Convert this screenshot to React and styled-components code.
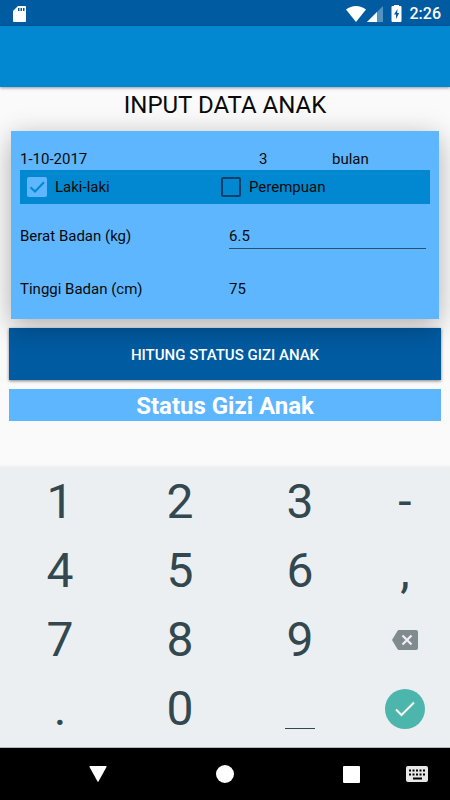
import { useState } from "react";
import styled, { createGlobalStyle } from "styled-components";

const GlobalStyle = createGlobalStyle`
* {
    box-sizing: border-box;
}
body {
    margin: 0;
    background-color: #fafafa;
    color: #0a0a0a;
    font-family: Roboto, sans-serif;
    font-size: 15px;
}
button, input {
    font-family: inherit;
    font-size: inherit;
    color: inherit;
}
`

const Page = styled.div`
display: flex;
flex-direction: column;
min-height: 100vh;
`

const StatusBar = styled.div`
display: flex;
align-items: center;
height: 26px;
padding: 1px 9px 0 12px;
background-color: #005ba1;
color: white;
`

const StatusIcons = styled.div`
display: flex;
align-items: center;
gap: 8px;
margin-left: auto;
`

const Signals = styled.div`
display: flex;
gap: 1px;
`

const Time = styled.span`
font-size: 16px;
font-weight: 500;
line-height: 26px;
`

const AppBar = styled.header`
height: 61px;
background-color: #0288d1;
box-shadow: 0 1px 3px rgba(0, 0, 0, 0.4);
`

const Form = styled.form`
display: flex;
flex-direction: column;
flex: 1;
padding: 0 9px;
`

const Title = styled.h1`
margin: 0 0 8px;
font-size: 24px;
font-weight: 400;
line-height: 36px;
text-align: center;
`

// the z-index lets the card's shadow fall on the button below it
const Card = styled.section`
position: relative;
z-index: 1;
margin: 0 2px 9px;
padding: 18px 9px 4px;
background-color: #5eb6ff;
box-shadow: 0 0 24px rgba(0, 0, 0, 0.14), 0 12px 24px rgba(0, 0, 0, 0.18);
`

const AgeRow = styled.div`
display: grid;
grid-template-columns: 239fr 73fr 98fr;
line-height: 21px;
`

const GenderRow = styled.div`
display: grid;
grid-template-columns: 194fr 209fr;
align-items: center;
height: 34px;
margin-bottom: 5px;
padding-left: 7px;
background-color: #0288d1;
`

const CheckLabel = styled.label`
display: flex;
align-items: center;
gap: 8px;
`

const CheckBox = styled.span`
display: grid;

input, svg {
    grid-area: 1 / 1;
    width: 20px;
    height: 20px;
    margin: 0;
}
input {
    appearance: none;
    border: 2px solid #08406a;
    border-radius: 2px;
}
input:checked {
    border-color: #5eb6ff;
    background-color: #5eb6ff;
}
svg {
    pointer-events: none;
}
`

const FieldRow = styled.div`
display: grid;
grid-template-columns: 209fr 197fr;
align-items: center;
height: 53px;
padding-right: 4px;
`

const Input = styled.input`
width: 100%;
height: 26px;
padding: 1px 0 0;
border: 0;
border-bottom: 1px solid ${(props) => (props.$line ? "#26506f" : "transparent")};
border-radius: 0;
background: none;
outline: none;
`

const SubmitButton = styled.button`
height: 52px;
margin-bottom: 9px;
padding: 2px 0 0;
border: 0;
background-color: #005ba1;
box-shadow: 0 1px 3px rgba(0, 0, 0, 0.5);
color: white;
font-weight: 500;
`

const Result = styled.h2`
margin: 0;
padding-top: 2px;
background-color: #5eb6ff;
color: white;
font-size: 24px;
font-weight: 700;
line-height: 30px;
text-align: center;
`

const Keypad = styled.div`
display: grid;
grid-template-columns: 4fr 4fr 4fr 3fr;
grid-auto-rows: 69px;
padding-bottom: 4px;
border-top: 2px solid #f3f4f4;
border-bottom: 1px solid #b4b9bc;
background-color: #eceff1;
`

const Key = styled.button`
display: flex;
align-items: center;
justify-content: center;
padding: 0;
border: 0;
background: none;
color: #33474f;
font-size: 48px;
line-height: 69px;
`

const SpaceLine = styled.span`
width: 30px;
height: 1px;
margin-top: 40px;
background-color: #33474f;
`

const DoneCircle = styled.span`
display: flex;
align-items: center;
justify-content: center;
width: 40px;
height: 40px;
border-radius: 50%;
background-color: #4db6ac;
`

const NavBar = styled.nav`
display: grid;
grid-template-columns: 106fr 148fr 104fr 28fr;
height: 52px;
padding: 0 19px 0 45px;
background-color: black;
`

const NavButton = styled.button`
display: flex;
align-items: center;
justify-content: center;
padding: 0;
border: 0;
background: none;
`

function Check({ label, checked, onChange }) {
    return (
    <CheckLabel>
        <CheckBox>
            <input type="checkbox" checked={checked} onChange={onChange}/>
            {checked && (
            <svg viewBox="0 0 20 20" fill="none" stroke="#0288d1" strokeWidth="2">
                <path d="M3.5 10.2 8 14.5 17 5.2"/>
            </svg>
            )}
        </CheckBox>
        {label}
    </CheckLabel>
    )
}

function TopStatus() {
    return (
    <StatusBar>
        <svg width="15" height="18" viewBox="0 0 15 18">
            <path d="M6 1h7a1 1 0 0 1 1 1v14a1 1 0 0 1-1 1H2a1 1 0 0 1-1-1V6z" fill="white"/>
            <path d="M6 3h1.500v3H6zM8.500 3H10v3H8.500zM11 3h1.500v3H11z" fill="#005ba1"/>
        </svg>
        <StatusIcons>
            <Signals>
                <svg width="20" height="16" viewBox="0 0 20 16">
                    <path d="M0 3.500Q4.500 0 10 0T20 3.500L10 16z" fill="white"/>
                </svg>
                <svg width="16" height="16" viewBox="0 0 16 16">
                    <path d="M16 0v16H0z" fill="#5293c2"/>
                    <path d="M10 6v10H0z" fill="white"/>
                </svg>
            </Signals>
            <svg width="11" height="17" viewBox="0 0 11 17">
                <path d="M3 0h5v1h1.500q1 0 1 1v14q0 1-1 1h-8q-1 0-1-1V2q0-1 1-1H3z" fill="white"/>
                <path d="M6.500 4 3 9.500h2V14l3.200-6H6.200z" fill="#005ba1"/>
            </svg>
            <Time>2:26</Time>
        </StatusIcons>
    </StatusBar>
    )
}

function Keyboard({ onKey }) {
    const keys = ["1", "2", "3", "-", "4", "5", "6", ",", "7", "8", "9", "del", ".", "0", "space", "done"]
    const drawings = {
        del: (
            <svg width="26" height="20" viewBox="0 0 26 20">
                <path d="M7 0h17a2 2 0 0 1 2 2v16a2 2 0 0 1-2 2H7q-1 0-1.600-.9L0 10 5.400.9Q6 0 7 0z" fill="#808b90"/>
                <path d="m10.500 5.500 9 9m0-9-9 9" stroke="#eceff1" strokeWidth="2.300"/>
            </svg>
        ),
        space: <SpaceLine/>,
        done: (
            <DoneCircle>
                <svg width="20" height="16" viewBox="0 0 20 16" fill="none" stroke="white" strokeWidth="2">
                    <path d="m1 8.500 5.500 5.500L19 1.500"/>
                </svg>
            </DoneCircle>
        ),
    }

    return (
    <Keypad>
        {keys.map((key) => (
            <Key key={key} type="button" aria-label={key} onClick={() => onKey(key)}>
                {drawings[key] || key}
            </Key>
        ))}
    </Keypad>
    )
}

function BottomNav() {
    return (
    <NavBar>
        <NavButton aria-label="Kembali">
            <svg width="18" height="16" viewBox="0 0 18 16">
                <path d="M1 0h16q1 0 .5 1L9.600 15.300q-.6 1-1.200 0L.5 1Q0 0 1 0z" fill="white"/>
            </svg>
        </NavButton>
        <NavButton aria-label="Beranda">
            <svg width="18" height="18" viewBox="0 0 18 18">
                <circle cx="9" cy="9" r="9" fill="white"/>
            </svg>
        </NavButton>
        <NavButton aria-label="Aplikasi">
            <svg width="17" height="17" viewBox="0 0 17 17">
                <rect width="17" height="17" rx="1" fill="white"/>
            </svg>
        </NavButton>
        <NavButton aria-label="Keyboard">
            <svg width="22" height="16" viewBox="0 0 22 16">
                <rect width="22" height="16" rx="2" fill="#e8e8e8"/>
                <path d="M3 4.500h16M3 8.500h16" stroke="black" strokeWidth="2" strokeDasharray="2 1.500"/>
                <path d="M7 12.500h9" stroke="black" strokeWidth="2"/>
            </svg>
        </NavButton>
    </NavBar>
    )
}

function App() {
    const [gender, setGender] = useState("L")
    const [weight, setWeight] = useState("6.5")
    const [height, setHeight] = useState("75")

    function handleKey(key) {
        if (key === "done") return
        if (key === "del") {
            setWeight(weight.slice(0, -1))
        } else {
            setWeight(weight + (key === "space" ? " " : key))
        }
    }

    return (
    <Page>
        <GlobalStyle/>
        <TopStatus/>
        <AppBar/>
        <Form onSubmit={(e) => e.preventDefault()}>
            <Title>INPUT DATA ANAK</Title>
            <Card>
                <AgeRow>
                    <span>1-10-2017</span>
                    <span>3</span>
                    <span>bulan</span>
                </AgeRow>
                <GenderRow>
                    <Check label="Laki-laki" checked={gender === "L"} onChange={() => setGender("L")}/>
                    <Check label="Perempuan" checked={gender === "P"} onChange={() => setGender("P")}/>
                </GenderRow>
                <FieldRow>
                    <label htmlFor="berat">Berat Badan (kg)</label>
                    <Input id="berat" $line value={weight} onChange={(e) => setWeight(e.target.value)}/>
                </FieldRow>
                <FieldRow>
                    <label htmlFor="tinggi">Tinggi Badan (cm)</label>
                    <Input id="tinggi" value={height} onChange={(e) => setHeight(e.target.value)}/>
                </FieldRow>
            </Card>
            <SubmitButton type="submit">HITUNG STATUS GIZI ANAK</SubmitButton>
            <Result>Status Gizi Anak</Result>
        </Form>
        <Keyboard onKey={handleKey}/>
        <BottomNav/>
    </Page>
    )
}


export default App
